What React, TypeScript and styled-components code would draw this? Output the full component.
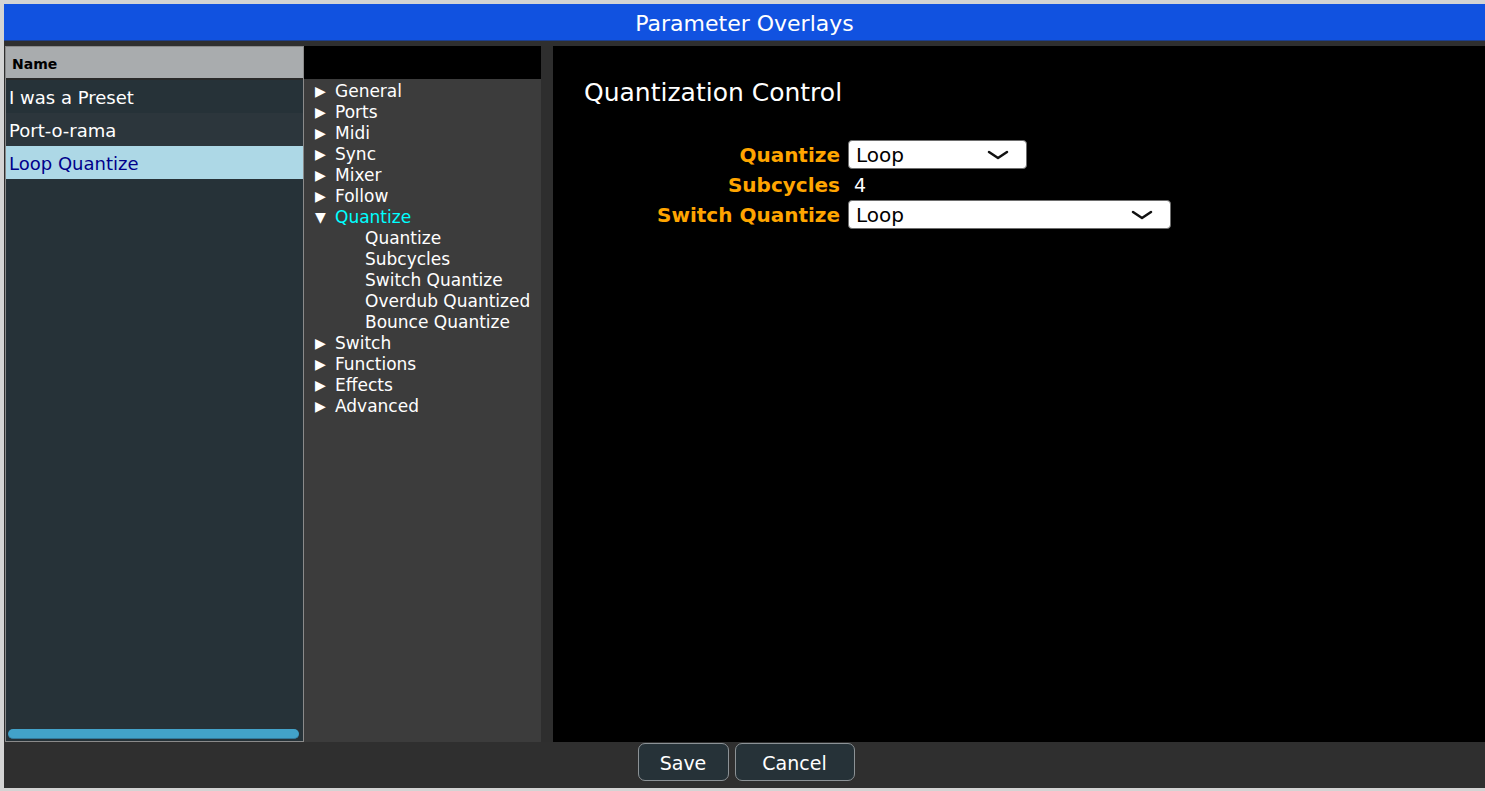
import React from "react";
import styled, { createGlobalStyle } from "styled-components";

const Global = createGlobalStyle`
  html, body { margin: 0; padding: 0; background: #d4d4d4; overflow: hidden; }
  * { box-sizing: border-box; }
  body { font-family: "DejaVu Sans", Verdana, sans-serif; }
`;

const Frame = styled.div`
  width: 1485px;
  height: 791px;
  padding: 4px 0 3px 4px;
  background: #d4d4d4;
  display: flex;
  flex-direction: column;
`;

const TitleBar = styled.div`
  height: 37px;
  background: #1152e0;
  border-bottom: 1px solid #1d3f8e;
  color: #ffffff;
  font-size: 22px;
  display: flex;
  align-items: center;
  justify-content: center;
  padding-top: 2px;
`;

const Body = styled.div`
  flex: 1;
  background: #2f2f2f;
  display: flex;
  flex-direction: column;
  min-height: 0;
`;

const Panels = styled.div`
  flex: 1;
  display: flex;
  padding: 5px 0 0 1px;
  min-height: 0;
`;

const ListPanel = styled.div`
  width: 299px;
  border: 1px solid #8a8a8a;
  background: #263238;
  display: flex;
  flex-direction: column;
`;

const ListHeader = styled.div`
  height: 33px;
  background: #a9acae;
  border-bottom: 2px solid #2a2a2a;
  color: #000;
  font-weight: bold;
  font-size: 14px;
  display: flex;
  align-items: center;
  padding: 3px 0 0 6px;
`;

const ListRow = styled.div<{ $bg: string; $fg: string }>`
  height: 33px;
  background: ${(p) => p.$bg};
  color: ${(p) => p.$fg};
  font-size: 18px;
  display: flex;
  align-items: center;
  padding: 2px 0 0 3px;
`;

const ListFill = styled.div`
  flex: 1;
`;

const HScroll = styled.div`
  height: 10px;
  margin: 0 4px 2px 2px;
  border-radius: 5px;
  background: #42a2c9;
  border-bottom: 1px solid #33789a;
`;

const TreePanel = styled.div`
  width: 237px;
  background: #3c3c3c;
  display: flex;
  flex-direction: column;
`;

const TreeHeader = styled.div`
  height: 33px;
  background: #000;
`;

const TreeList = styled.div`
  padding-top: 1px;
  display: flex;
  flex-direction: column;
`;

const TreeItem = styled.div<{ $active?: boolean; $child?: boolean }>`
  height: 21px;
  display: flex;
  align-items: center;
  color: ${(p) => (p.$active ? "#00ffff" : "#ffffff")};
  font-size: 17px;
  padding-left: ${(p) => (p.$child ? "61px" : "11px")};
  white-space: nowrap;
`;

const Arrow = styled.span`
  display: inline-block;
  width: 20px;
  font-size: 14px;
  color: #ffffff;
`;

const Splitter = styled.div`
  width: 12px;
  background: #2e2e2e;
`;

const Content = styled.div`
  flex: 1;
  background: #000;
  padding: 31px 0 0 31px;
  color: #fff;
`;

const Heading = styled.div`
  font-size: 25px;
  line-height: 32px;
  margin-bottom: 30px;
`;

const Form = styled.div`
  display: grid;
  grid-template-columns: 256px auto;
  column-gap: 8px;
  align-items: center;
  justify-content: start;
`;

const Label = styled.div`
  color: #ffa500;
  font-weight: bold;
  font-size: 20px;
  text-align: right;
  height: 30px;
  line-height: 33px;
`;

const Value = styled.div`
  font-size: 19px;
  height: 30px;
  line-height: 32px;
  padding-left: 6px;
`;

const Select = styled.div<{ $w: number }>`
  width: ${(p) => p.$w}px;
  height: 29px;
  background: #fff;
  border: 1px solid #6e6e6e;
  border-radius: 4px;
  color: #000;
  font-size: 20px;
  display: flex;
  align-items: center;
  justify-content: space-between;
  padding: 2px 17px 0 7px;
`;

const Footer = styled.div`
  height: 46px;
  display: flex;
  justify-content: center;
  align-items: flex-start;
  gap: 6px;
  padding: 1px 0 0 3px;
`;

const Button = styled.button<{ $w: number }>`
  width: ${(p) => p.$w}px;
  height: 38px;
  background: #263238;
  border: 1px solid #8c9296;
  border-radius: 7px;
  color: #fff;
  font-family: "DejaVu Sans", Verdana, sans-serif;
  font-size: 19px;
  padding: 2px 0 0;
`;

const Chevron = () => (
  <svg width="22" height="12" viewBox="0 0 22 12">
    <path d="M2 3 L11 9 L20 3" fill="none" stroke="#111" strokeWidth="2.5" strokeLinecap="round" strokeLinejoin="round" />
  </svg>
);

const tree: { name: string; open?: boolean; children?: string[] }[] = [
  { name: "General" },
  { name: "Ports" },
  { name: "Midi" },
  { name: "Sync" },
  { name: "Mixer" },
  { name: "Follow" },
  { name: "Quantize", open: true, children: ["Quantize", "Subcycles", "Switch Quantize", "Overdub Quantized", "Bounce Quantize"] },
  { name: "Switch" },
  { name: "Functions" },
  { name: "Effects" },
  { name: "Advanced" },
];

export default function App() {
  return (
    <Frame>
      <Global />
      <TitleBar>Parameter Overlays</TitleBar>
      <Body>
        <Panels>
          <ListPanel>
            <ListHeader>Name</ListHeader>
            <ListRow $bg="#263238" $fg="#ffffff">I was a Preset</ListRow>
            <ListRow $bg="#2c363c" $fg="#ffffff">Port-o-rama</ListRow>
            <ListRow $bg="#add8e6" $fg="#00008b">Loop Quantize</ListRow>
            <ListFill />
            <HScroll />
          </ListPanel>
          <TreePanel>
            <TreeHeader />
            <TreeList>
              {tree.map((t) => (
                <React.Fragment key={t.name}>
                  <TreeItem $active={t.open}>
                    <Arrow>{t.open ? "▼" : "▶"}</Arrow>
                    {t.name}
                  </TreeItem>
                  {t.open &&
                    t.children!.map((c) => (
                      <TreeItem key={c} $child>
                        {c}
                      </TreeItem>
                    ))}
                </React.Fragment>
              ))}
            </TreeList>
          </TreePanel>
          <Splitter />
          <Content>
            <Heading>Quantization Control</Heading>
            <Form>
              <Label>Quantize</Label>
              <div>
                <Select $w={179}>
                  Loop
                  <Chevron />
                </Select>
              </div>
              <Label>Subcycles</Label>
              <Value>4</Value>
              <Label>Switch Quantize</Label>
              <div>
                <Select $w={323}>
                  Loop
                  <Chevron />
                </Select>
              </div>
            </Form>
          </Content>
        </Panels>
        <Footer>
          <Button $w={91}>Save</Button>
          <Button $w={120}>Cancel</Button>
        </Footer>
      </Body>
    </Frame>
  );
}
